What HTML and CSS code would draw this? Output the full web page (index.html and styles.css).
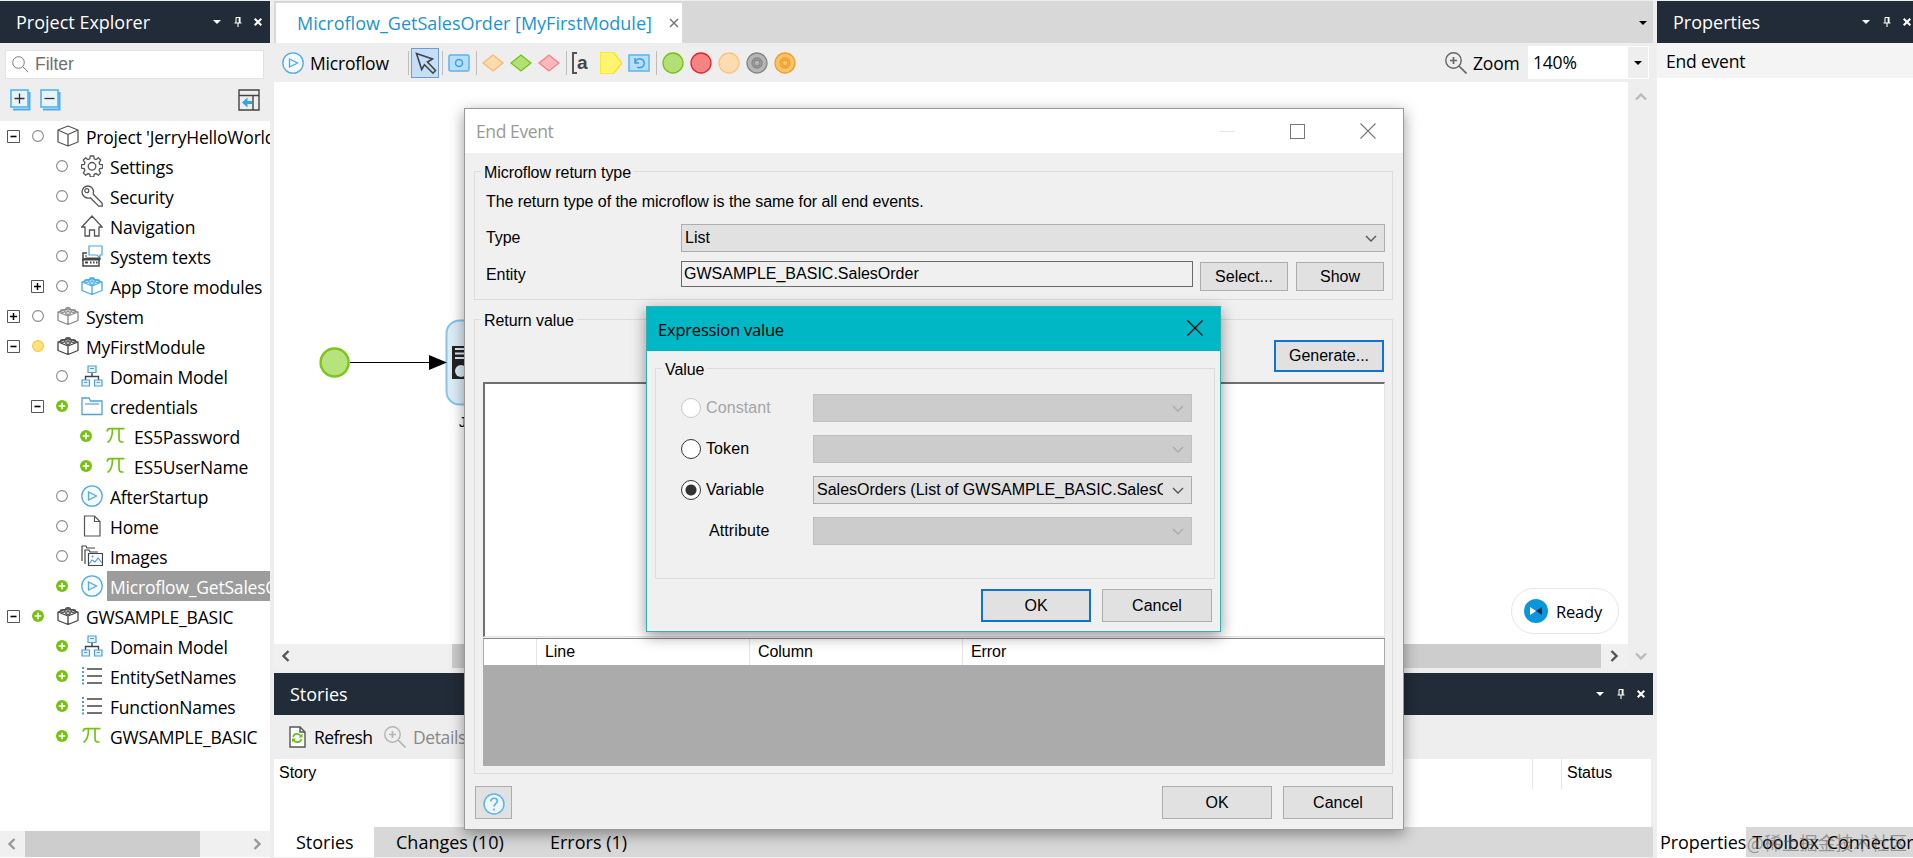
FILE: index.html
```html
<!DOCTYPE html>
<html lang="en">
<head>
  <meta charset="UTF-8">
  <title>Microflow_GetSalesOrder [MyFirstModule]</title>
  <link rel="stylesheet" href="styles.css">
</head>
<body>
  <!-- Icon definitions -->
  <svg class="defs" width="0" height="0">
    <symbol id="caret" viewBox="0 0 8 4"><path d="M0 0h8L4 4z" fill="currentColor"/></symbol>
    <symbol id="pin" viewBox="0 0 8 10"><path d="M2 .5h4v5M2 .5v5M5.2 1v4.500M.5 6h7M4 6v4" fill="none" stroke="currentColor" stroke-width="1.1"/></symbol>
    <symbol id="close" viewBox="0 0 8 8"><path d="M.7.7l6.600 6.600M7.300.7L.7 7.300" stroke="currentColor" stroke-width="2"/></symbol>
    <symbol id="tab-close" viewBox="0 0 10 10"><path d="M1 1l8 8M9 1L1 9" stroke="currentColor" stroke-width="1.5"/></symbol>
    <symbol id="thin-close" viewBox="0 0 16 16"><path d="M.5.5l15 15M15.500.5l-15 15" stroke="currentColor" stroke-width="1.1"/></symbol>
    <symbol id="chevron" viewBox="0 0 12 7"><path d="M1 1l5 5 5-5" fill="none" stroke="currentColor" stroke-width="1.4"/></symbol>
    <symbol id="chevron-bold" viewBox="0 0 12 8"><path d="M1 1.500l5 5 5-5" fill="none" stroke="currentColor" stroke-width="2.4"/></symbol>
    <symbol id="minus-box" viewBox="0 0 13 13"><path d="M.5.5h12v12H.5z" fill="#fff" stroke="#555"/><path d="M3.500 6.500h6" stroke="#000" stroke-width="1.6"/></symbol>
    <symbol id="plus-box" viewBox="0 0 13 13"><path d="M.5.5h12v12H.5z" fill="#fff" stroke="#555"/><path d="M3 6.500h7M6.500 3v7" stroke="#000" stroke-width="1.5"/></symbol>
    <symbol id="st-none" viewBox="0 0 12 12"><circle cx="6" cy="6" r="5.400" fill="#fff" stroke="#888" stroke-width="1.1"/></symbol>
    <symbol id="st-yellow" viewBox="0 0 12 12"><circle cx="6" cy="6" r="5.400" fill="#ffe27a" stroke="#f5c63a" stroke-width="1.1"/></symbol>
    <symbol id="st-add" viewBox="0 0 12 12"><circle cx="6" cy="6" r="6" fill="#76c212"/><path d="M2.700 6h6.600M6 2.700v6.600" stroke="#fff" stroke-width="1.7"/></symbol>
    <symbol id="cube" viewBox="0 0 22 22"><path d="M11 1l10 4v12l-10 4L1 17V5zM1 5l10 4.500L21 5M11 9.500V21" fill="none" stroke="#555" stroke-width="1.3" stroke-linejoin="round"/></symbol>
    <symbol id="gear" viewBox="0 0 22 22"><path d="M9.300 1h3.400l.5 2.800 1.800.8 2.400-1.700 2.300 2.300-1.600 2.400.7 1.800 2.900.5v3.300l-2.900.5-.7 1.800 1.600 2.400-2.300 2.300-2.400-1.600-1.800.7-.5 2.700H9.300l-.5-2.700-1.800-.7-2.400 1.600-2.300-2.300 1.600-2.400-.7-1.800L.4 13.200V9.900l2.800-.5.7-1.800-1.600-2.400 2.300-2.300L7 4.600l1.800-.8z" fill="none" stroke="#555" stroke-width="1.3"/><circle cx="11" cy="11.300" r="3.800" fill="none" stroke="#555" stroke-width="1.300"/></symbol>
    <symbol id="key" viewBox="0 0 22 22"><path d="M12.300 9.300l8.900 8.900v3h-3.500l-8.400-8.400C5 14 1 11 1 7c0-3.500 2.600-6 6-6 4 0 6.500 4 5.300 8.300z" fill="none" stroke="#555" stroke-width="1.3"/><circle cx="5.800" cy="5.700" r="2" fill="none" stroke="#555" stroke-width="1.200"/></symbol>
    <symbol id="home" viewBox="0 0 22 22"><path d="M.8 12L11 1l10.200 11H18v9h-4.500v-6h-5v6H4v-9z" fill="none" stroke="#555" stroke-width="1.3"/></symbol>
    <symbol id="texts" viewBox="0 0 22 22"><path d="M8 1h13v9h-2v3l-3-3H8z" fill="none" stroke="#4aa8e8" stroke-width="1.2"/><path d="M6 8H2v13h16v-7H2" fill="none" stroke="#444" stroke-width="1.5"/><path d="M1 15h18v-2H5zM4 11h2" stroke="#444" fill="#444"/><path d="M4 17.500h3M9 17.500h1.500M12 17.500h1.500M15 17.500h1.500" stroke="#444" stroke-width="2"/></symbol>
    <symbol id="brick" viewBox="0 0 22 22"><path d="M11 3.500L21 7v8.500l-10 4-10-4V7zM1 7l10 4 10-4M11 11v8.500" fill="none" stroke="currentColor" stroke-width="1.3" stroke-linejoin="round"/><g fill="none" stroke="currentColor" stroke-width="1.200"><ellipse cx="11" cy="3.800" rx="2.300" ry="1.300"/><ellipse cx="5.800" cy="6" rx="2.300" ry="1.300"/><ellipse cx="16.200" cy="6" rx="2.300" ry="1.300"/><ellipse cx="11" cy="8" rx="2.300" ry="1.300"/></g></symbol>
    <symbol id="domain" viewBox="0 0 22 22"><path d="M11 7.500v4M4.500 15v-3.500h13V15" fill="none" stroke="#444" stroke-width="1.400"/><g fill="#e4f2fc" stroke="#4a9fe0" stroke-width="1.200"><path d="M7 1h8v6.500H7zM1 15h7.500v6H1zM13.500 15H21v6h-7.500z"/><path d="M9 3.500h4M3.200 17.500h3M15.700 17.500h3"/></g></symbol>
    <symbol id="folder" viewBox="0 0 22 22"><path d="M1 3h7l1.500 3H21v13.500H1z" fill="#fff" stroke="#4aa3dd" stroke-width="1.300"/><path d="M4 9h14" stroke="#4aa3dd" stroke-width="1.200"/></symbol>
    <symbol id="pi" viewBox="0 0 22 22"><path d="M2 6.500C2.500 4 3.500 3.700 5 3.700h14.500M7.500 4c0 6-.8 11-5 13.500M14 4v9.500c0 3 1.500 4 4.500 3.300" fill="none" stroke="#76c212" stroke-width="1.700"/></symbol>
    <symbol id="play" viewBox="0 0 22 22"><circle cx="11" cy="11" r="10.200" fill="#f4faff" stroke="#4fa9ea" stroke-width="1.300"/><path d="M7.500 7l8 4-8 4z" fill="none" stroke="#4fa9ea" stroke-width="1.300"/></symbol>
    <symbol id="page" viewBox="0 0 22 22"><path d="M3.500 1h10L19 6.500V21H3.500zM13.500 1v5.500H19" fill="#fff" stroke="#555" stroke-width="1.200"/></symbol>
    <symbol id="images" viewBox="0 0 22 22"><path d="M1 16V1h4l1 2h8M4 19V5h4l1 2h8" fill="none" stroke="#444" stroke-width="1.200"/><path d="M7.500 8.500h14v12h-14z" fill="#fff" stroke="#444" stroke-width="1.200"/><path d="M8 19l3-4 3 2 3-4 4 5" fill="none" stroke="#4a9fe0" stroke-width="1.200"/><circle cx="11.500" cy="11.500" r="1" fill="#4a9fe0"/></symbol>
    <symbol id="list" viewBox="0 0 22 22"><path d="M6 4h15M6 11h15M6 18h15" stroke="#444" stroke-width="1.500"/><path d="M1 3h2M1 7h2M1 11h2M1 15h2M1 18.500h2" stroke="#4a9fe0" stroke-width="1.800"/></symbol>
    <symbol id="lens" viewBox="0 0 22 22"><circle cx="8.500" cy="8.500" r="7.700" fill="none" stroke="currentColor" stroke-width="1.400"/><path d="M14 14l7.500 7.500M5 8.500h7M8.500 5v7" stroke="currentColor" stroke-width="1.700"/></symbol>
  </svg>

  <div class="workspace">
    <!-- Project Explorer -->
    <aside class="explorer">
      <div class="pane-title">
        <span>Project Explorer</span>
        <div class="pane-tools"><svg class="i-caret"><use href="#caret"/></svg><svg class="i-pin"><use href="#pin"/></svg><svg class="i-close"><use href="#close"/></svg></div>
      </div>
      <div class="explorer-bar">
        <div class="filter">
          <svg width="17" height="17" viewBox="0 0 17 17"><circle cx="6.500" cy="6.500" r="5.800" fill="none" stroke="#777"/><path d="M10.700 10.700l5.500 5.500" stroke="#777"/></svg>
          <span>Filter</span>
        </div>
        <div class="explorer-tools">
          <svg width="22" height="22" viewBox="0 0 22 22"><path d="M19.500 3v17.500H3" fill="none" stroke="#4aaef0" stroke-width="2"/><path d="M1 1h17v17H1z" fill="#e8f4fc" stroke="#4aaef0" stroke-width="1.500"/><path d="M4.500 9.500h10M9.500 4.500v10" stroke="#333" stroke-width="1.300"/></svg>
          <svg width="22" height="22" viewBox="0 0 22 22"><path d="M19.500 3v17.500H3" fill="none" stroke="#4aaef0" stroke-width="2"/><path d="M1 1h17v17H1z" fill="#e8f4fc" stroke="#4aaef0" stroke-width="1.500"/><path d="M4.500 9.500h10" stroke="#333" stroke-width="1.300"/></svg>
          <svg class="locate" width="22" height="22" viewBox="0 0 22 22"><path d="M1 1h20v20H1zM1 6.500h20M15 6.500V21" fill="none" stroke="#444" stroke-width="1.400"/><path d="M4 13.500l5.500-5v3.500H14v3H9.500v3.500z" fill="#2fa4f0"/></svg>
        </div>
      </div>
      <ul class="tree">
        <li class="l0"><svg class="exp"><use href="#minus-box"/></svg><svg class="st"><use href="#st-none"/></svg><svg class="ic"><use href="#cube"/></svg><span>Project 'JerryHelloWorld'</span></li>
        <li class="l1"><i class="exp"></i><svg class="st"><use href="#st-none"/></svg><svg class="ic"><use href="#gear"/></svg><span>Settings</span></li>
        <li class="l1"><i class="exp"></i><svg class="st"><use href="#st-none"/></svg><svg class="ic"><use href="#key"/></svg><span>Security</span></li>
        <li class="l1"><i class="exp"></i><svg class="st"><use href="#st-none"/></svg><svg class="ic"><use href="#home"/></svg><span>Navigation</span></li>
        <li class="l1"><i class="exp"></i><svg class="st"><use href="#st-none"/></svg><svg class="ic"><use href="#texts"/></svg><span>System texts</span></li>
        <li class="l1"><svg class="exp"><use href="#plus-box"/></svg><svg class="st"><use href="#st-none"/></svg><svg class="ic blue"><use href="#brick"/></svg><span>App Store modules</span></li>
        <li class="l0"><svg class="exp"><use href="#plus-box"/></svg><svg class="st"><use href="#st-none"/></svg><svg class="ic gray"><use href="#brick"/></svg><span>System</span></li>
        <li class="l0"><svg class="exp"><use href="#minus-box"/></svg><svg class="st"><use href="#st-yellow"/></svg><svg class="ic"><use href="#brick"/></svg><span>MyFirstModule</span></li>
        <li class="l1"><i class="exp"></i><svg class="st"><use href="#st-none"/></svg><svg class="ic"><use href="#domain"/></svg><span>Domain Model</span></li>
        <li class="l1"><svg class="exp"><use href="#minus-box"/></svg><svg class="st"><use href="#st-add"/></svg><svg class="ic"><use href="#folder"/></svg><span>credentials</span></li>
        <li class="l2"><i class="exp"></i><svg class="st"><use href="#st-add"/></svg><svg class="ic"><use href="#pi"/></svg><span>ES5Password</span></li>
        <li class="l2"><i class="exp"></i><svg class="st"><use href="#st-add"/></svg><svg class="ic"><use href="#pi"/></svg><span>ES5UserName</span></li>
        <li class="l1"><i class="exp"></i><svg class="st"><use href="#st-none"/></svg><svg class="ic"><use href="#play"/></svg><span>AfterStartup</span></li>
        <li class="l1"><i class="exp"></i><svg class="st"><use href="#st-none"/></svg><svg class="ic"><use href="#page"/></svg><span>Home</span></li>
        <li class="l1"><i class="exp"></i><svg class="st"><use href="#st-none"/></svg><svg class="ic"><use href="#images"/></svg><span>Images</span></li>
        <li class="l1 selected"><i class="exp"></i><svg class="st"><use href="#st-add"/></svg><svg class="ic"><use href="#play"/></svg><span>Microflow_GetSalesOrder</span></li>
        <li class="l0"><svg class="exp"><use href="#minus-box"/></svg><svg class="st"><use href="#st-add"/></svg><svg class="ic"><use href="#brick"/></svg><span>GWSAMPLE_BASIC</span></li>
        <li class="l1"><i class="exp"></i><svg class="st"><use href="#st-add"/></svg><svg class="ic"><use href="#domain"/></svg><span>Domain Model</span></li>
        <li class="l1"><i class="exp"></i><svg class="st"><use href="#st-add"/></svg><svg class="ic"><use href="#list"/></svg><span>EntitySetNames</span></li>
        <li class="l1"><i class="exp"></i><svg class="st"><use href="#st-add"/></svg><svg class="ic"><use href="#list"/></svg><span>FunctionNames</span></li>
        <li class="l1"><i class="exp"></i><svg class="st"><use href="#st-add"/></svg><svg class="ic"><use href="#pi"/></svg><span>GWSAMPLE_BASIC</span></li>
      </ul>
      <div class="hscroll explorer-scroll">
        <svg class="arrow left"><use href="#chevron-bold"/></svg>
        <div class="thumb"></div>
        <svg class="arrow right"><use href="#chevron-bold"/></svg>
      </div>
    </aside>

    <!-- Editor and stories -->
    <main class="center">
      <div class="tabbar">
        <div class="tab"><span>Microflow_GetSalesOrder [MyFirstModule]</span><svg width="10" height="10"><use href="#tab-close"/></svg></div>
        <svg class="i-caret"><use href="#caret"/></svg>
      </div>
      <div class="toolbar">
        <svg class="tool" viewBox="0 0 22 22"><use href="#play"/></svg>
        <span class="tool-name">Microflow</span>
        <i class="sep"></i>
        <div class="pointer"><svg width="22" height="23" viewBox="0 0 22 23"><path d="M1.500 1.500l16 5.500-5 3 8 8.500-2.500 2.700-8.500-8.500-2.800 4.800z" fill="none" stroke="#444" stroke-width="1.600"/></svg></div>
        <i class="sep"></i>
        <svg class="tool" viewBox="0 0 22 22"><rect x="1" y="3" width="20" height="16" rx="1.500" fill="#b7dffa" stroke="#5ab4f0" stroke-width="1.500"/><circle cx="11" cy="11" r="3.500" fill="none" stroke="#3c9fe0" stroke-width="1.500"/></svg>
        <i class="sep"></i>
        <svg class="tool" viewBox="0 0 22 22"><path d="M1 11l10-8 10 8-10 8z" fill="#fcdcae" stroke="#fbb866" stroke-width="1.300"/></svg>
        <svg class="tool" viewBox="0 0 22 22"><path d="M1 11l10-8 10 8-10 8z" fill="#b2df76" stroke="#76c212" stroke-width="1.300"/></svg>
        <svg class="tool" viewBox="0 0 22 22"><path d="M1 11l10-8 10 8-10 8z" fill="#fcb8bc" stroke="#f58088" stroke-width="1.300"/></svg>
        <i class="sep"></i>
        <div class="tool note">a</div>
        <svg class="tool" viewBox="0 0 22 22"><path d="M0 0h13l9 11-9 11H0z" fill="#fff56e" stroke="#fae22c" stroke-width="1.500"/></svg>
        <svg class="tool" viewBox="0 0 22 22"><rect x="1" y="3" width="20" height="16" fill="#b7dffa" stroke="#5ab4f0" stroke-width="1.500"/><path d="M7 6v5h4M7.300 10.500a4.500 4.500 0 1 1 2 4.500" fill="none" stroke="#3c9fe0" stroke-width="1.500"/></svg>
        <i class="sep"></i>
        <svg class="tool" viewBox="0 0 22 22"><circle cx="11" cy="11" r="10" fill="#b2df76" stroke="#76c212" stroke-width="1.300"/></svg>
        <svg class="tool" viewBox="0 0 22 22"><circle cx="11" cy="11" r="10" fill="#f38482" stroke="#e6202b" stroke-width="1.300"/></svg>
        <svg class="tool" viewBox="0 0 22 22"><circle cx="11" cy="11" r="10" fill="#fddcb0" stroke="#fcc27c" stroke-width="1.300"/></svg>
        <svg class="tool" viewBox="0 0 22 22"><g fill="#b5b5b5" stroke="#858585" stroke-width="1.300"><circle cx="11" cy="11" r="10"/><circle cx="11" cy="11" r="5"/><circle cx="11" cy="11" r="3"/></g></svg>
        <svg class="tool" viewBox="0 0 22 22"><g fill="#f8c273" stroke="#f0a020" stroke-width="1.300"><circle cx="11" cy="11" r="10"/><circle cx="11" cy="11" r="5"/><circle cx="11" cy="11" r="3"/></g></svg>
        <div class="zoom">
          <svg class="tool"><use href="#lens"/></svg>
          <span>Zoom</span>
          <div class="zoom-box"><b>140%</b><i><svg class="i-caret"><use href="#caret"/></svg></i></div>
        </div>
      </div>
      <div class="editor">
        <div class="canvas">
          <svg class="flow" width="200" height="200" viewBox="274 282 200 200">
            <rect x="446.500" y="320.500" width="90" height="84" rx="13" fill="#dcedf8" stroke="#86c5e8" stroke-width="2"/>
            <path d="M350 362.500h80" stroke="#000"/>
            <path d="M429 355l18 7.500-18 7.500z"/>
            <circle cx="334.600" cy="362.500" r="14" fill="#b7e37c" stroke="#7cc61c" stroke-width="2.500"/>
            <path d="M452 346h20v33h-20z" fill="#222"/>
            <path d="M455 349h18M455 353.500h18M455 358h18" stroke="#dcedf8" stroke-width="2"/>
            <circle cx="461" cy="371" r="6" fill="#dcedf8"/>
            <text x="459" y="427" class="node-label">J</text>
          </svg>
          <div class="ready"><svg width="24" height="24" viewBox="0 0 24 24"><circle cx="12" cy="12" r="12" fill="#0a96dc"/><path d="M6 8l6 4-6 4z" fill="#fff"/><path d="M18 8l-6 4 6 4z" fill="#16304c"/></svg><span>Ready</span></div>
        </div>
        <div class="vscroll"><svg class="arrow up"><use href="#chevron-bold"/></svg><svg class="arrow"><use href="#chevron-bold"/></svg></div>
        <div class="hscroll canvas-scroll">
          <svg class="arrow left"><use href="#chevron-bold"/></svg>
          <div class="thumb"></div>
          <svg class="arrow right"><use href="#chevron-bold"/></svg>
        </div>
      </div>
      <section class="stories">
        <div class="pane-title">
          <span>Stories</span>
          <div class="pane-tools"><svg class="i-caret"><use href="#caret"/></svg><svg class="i-pin"><use href="#pin"/></svg><svg class="i-close"><use href="#close"/></svg></div>
        </div>
        <div class="stories-bar">
          <svg width="17" height="22" viewBox="0 0 17 22"><path d="M1 1h10l5 5v15H1zM11 1v5h5" fill="#fff" stroke="#555" stroke-width="1.400"/><path d="M4 11c1-4 6-4 8-1M12.500 13c-1 4-6 4-8 1" fill="none" stroke="#6bbd12" stroke-width="1.600"/><path d="M13.500 7.500v4h-4zM3 16.500v-4h4z" fill="#6bbd12"/></svg>
          <span>Refresh</span>
          <svg class="lens-off" width="22" height="22"><use href="#lens"/></svg>
          <span class="off">Details</span>
        </div>
        <div class="stories-head"><span class="c-story">Story</span><span class="c-gap"></span><span class="c-status">Status</span></div>
        <div class="bottom-tabs">
          <span class="active">Stories</span><span>Changes (10)</span><span>Errors (1)</span>
        </div>
      </section>
    </main>

    <!-- Properties -->
    <aside class="properties">
      <div class="pane-title">
        <span>Properties</span>
        <div class="pane-tools"><svg class="i-caret"><use href="#caret"/></svg><svg class="i-pin"><use href="#pin"/></svg><svg class="i-close"><use href="#close"/></svg></div>
      </div>
      <div class="prop-name">End event</div>
      <div class="prop-body"></div>
      <div class="prop-tabs"><span class="active">Properties</span><span class="rest"><b>Toolbox</b><b>Connector</b></span></div>
      <div class="watermark">@稀土掘金技术社区</div>
    </aside>
  </div>

  <!-- End Event dialog -->
  <div class="dialog end-event">
    <div class="dialog-title">
      <span>End Event</span>
      <div class="win-buttons">
        <i class="min"></i><i class="max"></i><svg width="16" height="16"><use href="#thin-close"/></svg>
      </div>
    </div>
    <div class="dialog-body">
      <div class="group group-type">
        <div class="legend">Microflow return type</div>
        <p class="hint">The return type of the microflow is the same for all end events.</p>
        <div class="row type-row">
          <label>Type</label>
          <div class="combo"><span>List</span><svg class="arrow"><use href="#chevron"/></svg></div>
        </div>
        <div class="row entity-row">
          <label>Entity</label>
          <div class="input">GWSAMPLE_BASIC.SalesOrder</div>
          <button class="small">Select...</button>
          <button class="small">Show</button>
        </div>
      </div>
      <div class="group group-value">
        <div class="legend">Return value</div>
        <button class="primary generate">Generate...</button>
        <div class="textarea"></div>
        <div class="grid">
          <div class="grid-head"><span></span><span>Line</span><span>Column</span><span>Error</span></div>
        </div>
      </div>
      <div class="dialog-foot">
        <button class="help"><svg width="22" height="22" viewBox="0 0 22 22"><circle cx="11" cy="11" r="10" fill="#eef6fc" stroke="#5ab4ee" stroke-width="1.500"/><path d="M7.800 8.500c0-4.500 6.600-4 6.600-.4 0 2.400-3.400 2.600-3.400 5.400M11 15.500v2" fill="none" stroke="#5ab4ee" stroke-width="1.700"/></svg></button>
        <button class="first">OK</button>
        <button>Cancel</button>
      </div>
    </div>
  </div>

  <!-- Expression value dialog -->
  <div class="dialog expression">
    <div class="dialog-title">
      <span>Expression value</span>
      <svg width="16" height="16"><use href="#thin-close"/></svg>
    </div>
    <div class="dialog-body">
      <div class="group">
        <div class="legend">Value</div>
        <div class="option off"><i class="radio"></i><label>Constant</label><div class="combo off"><svg class="arrow"><use href="#chevron"/></svg></div></div>
        <div class="option"><i class="radio"></i><label>Token</label><div class="combo off"><svg class="arrow"><use href="#chevron"/></svg></div></div>
        <div class="option"><i class="radio on"></i><label>Variable</label><div class="combo"><span>SalesOrders (List of GWSAMPLE_BASIC.SalesOrder)</span><svg class="arrow"><use href="#chevron"/></svg></div></div>
        <div class="option attr"><i class="radio none"></i><label>Attribute</label><div class="combo off"><svg class="arrow"><use href="#chevron"/></svg></div></div>
      </div>
      <div class="dialog-foot">
        <button class="primary first">OK</button>
        <button>Cancel</button>
      </div>
    </div>
  </div>
</body>
</html>
```
FILE: styles.css
```css
* {
  margin: 0;
  padding: 0;
  box-sizing: border-box;
}

body {
  width: 1913px;
  height: 858px;
  overflow: hidden;
  background-color: #eeeeee;
  color: #000;
  font-family: "Open Sans", "Noto Sans", sans-serif;
  font-size: 17.5px;
  letter-spacing: -0.2px;
  white-space: nowrap;
}

svg {
  display: block;
  flex: none;
}

i,
b {
  font-style: normal;
  font-weight: normal;
}

.defs {
  position: absolute;
}

.workspace {
  display: grid;
  grid-template-columns: 270px 1379px 256px;
  column-gap: 4px;
  height: 858px;
  padding-top: 1px;
}

/* Shared pane header */
.pane-title {
  display: flex;
  align-items: center;
  justify-content: space-between;
  height: 42px;
  padding: 0 8px 0 16px;
  background-color: #222b38;
  color: #fff;
  font-size: 18px;
  letter-spacing: 0;
}

.pane-title span {
  padding-bottom: 1px;
}

.pane-tools {
  display: flex;
  align-items: center;
  gap: 12.5px;
}

.i-caret {
  width: 8px;
  height: 4px;
}

.i-pin {
  width: 8px;
  height: 10px;
}

.i-close {
  width: 8px;
  height: 8px;
}

.arrow {
  width: 12px;
  height: 7px;
  color: #555;
}

.hscroll .arrow,
.vscroll .arrow {
  height: 8px;
}

.arrow.left {
  transform: rotate(90deg);
}

.arrow.right {
  transform: rotate(-90deg);
}

.arrow.up {
  transform: rotate(180deg);
}

/* Project Explorer */
.explorer {
  display: flex;
  flex-direction: column;
  min-width: 0;
  overflow: hidden;
  background-color: #fff;
}

.explorer-bar {
  height: 78px;
  padding: 7px 6px 0 5px;
  background-color: #eeeeee;
}

.filter {
  display: flex;
  align-items: center;
  gap: 6px;
  height: 29px;
  padding-left: 6px;
  border: 1px solid #e2e2e2;
  background-color: #fff;
  color: #707070;
  font-family: "Liberation Sans", sans-serif;
  letter-spacing: 0;
}

.explorer-tools {
  display: flex;
  gap: 8px;
  padding: 10px 4px 0 5px;
}

.explorer-tools .locate {
  margin-left: auto;
}

.tree {
  flex: 1;
  list-style-type: none;
}

.tree li {
  display: flex;
  align-items: center;
  height: 30px;
  padding-left: 7px;
}

.tree .l1 {
  padding-left: 31px;
}

.tree .l2 {
  padding-left: 55px;
}

.exp {
  flex: none;
  width: 13px;
  height: 13px;
}

.st {
  width: 12px;
  height: 12px;
  margin-left: 12px;
}

.ic {
  width: 22px;
  height: 22px;
  margin-left: 13px;
  color: #444;
}

.ic.blue {
  color: #3fa9ee;
}

.ic.gray {
  color: #888;
}

.tree span {
  height: 30px;
  margin-left: 4px;
  padding-left: 3px;
  line-height: 32px;
}

.selected span {
  flex: 1;
  background-color: #9c9c9c;
  color: #fff;
}

.hscroll {
  display: flex;
  align-items: center;
  background-color: #f0f0f0;
}

.hscroll .thumb {
  background-color: #cdcdcd;
}

.explorer-scroll {
  height: 26px;
  margin-bottom: 1px;
}

.explorer-scroll .arrow {
  margin: 0 7px 0 6px;
  color: #999;
}

.explorer-scroll .thumb {
  width: 175px;
  height: 26px;
  margin: 0 auto 0 0;
}

/* Editor */
.center {
  display: flex;
  flex-direction: column;
  min-width: 0;
}

.tabbar {
  display: flex;
  align-items: center;
  justify-content: space-between;
  height: 42px;
  padding: 2px 6px 0 2px;
  background-color: #d8d8d8;
}

.tab {
  display: flex;
  align-items: center;
  justify-content: space-between;
  width: 406px;
  height: 40px;
  padding: 0 3px 0 21px;
  background-color: #fff;
  color: #1a94d0;
  font-size: 18px;
  letter-spacing: 0;
}

.tab svg {
  color: #777;
}

.toolbar {
  display: flex;
  align-items: center;
  height: 39px;
  padding-left: 8px;
}

.tool {
  flex: none;
  width: 22px;
  height: 22px;
  margin-right: 6px;
}

.tool-name {
  width: 98px;
}

.sep {
  width: 1px;
  height: 24px;
  margin-right: 5px;
  background-color: #bdbdbd;
}

.pointer {
  width: 28px;
  height: 30px;
  margin: 0 3px 0 -3px;
  padding: 3px;
  border: 1px solid #6f9bd0;
  background-color: #c5dff8;
}

.note {
  width: 16px;
  margin-right: 12px;
  padding-left: 5px;
  background: linear-gradient(#555, #555) 0 0 / 2px 22px no-repeat, linear-gradient(#555, #555) 0 0 / 5px 2px no-repeat, linear-gradient(#555, #555) 0 100% / 5px 2px no-repeat;
  color: #444;
  font: bold 19px/21px "Liberation Sans", sans-serif;
}

.zoom {
  display: flex;
  align-items: center;
  margin-left: auto;
  padding-right: 4px;
}

.zoom .tool {
  color: #666;
}

.zoom span {
  width: 55px;
}

.zoom-box {
  display: flex;
  justify-content: space-between;
  width: 121px;
  height: 33px;
  padding: 1px 1px 1px 5px;
  background-color: #fff;
  line-height: 31px;
}

.zoom-box i {
  display: flex;
  align-items: center;
  justify-content: center;
  width: 20px;
  background-color: #eeeeee;
}

.editor {
  display: grid;
  grid-template-columns: 1fr 25px;
  grid-template-rows: 562px 24px;
  height: 591px;
}

.canvas {
  position: relative;
  background-color: #fff;
}

.flow {
  position: absolute;
  top: 200px;
  left: 0;
}

.node-label {
  font: 14px "Liberation Sans", sans-serif;
}

.ready {
  position: absolute;
  right: 9px;
  bottom: 10px;
  display: flex;
  align-items: center;
  gap: 8px;
  width: 108px;
  height: 46px;
  padding-left: 12px;
  border: 1px solid #e6e6e6;
  border-radius: 23px;
  font-size: 16.5px;
}

.vscroll {
  display: flex;
  flex-direction: column;
  grid-row: span 2;
  align-items: center;
  justify-content: space-between;
  padding: 11px 0 8px;
}

.vscroll .arrow {
  color: #bbb;
}

.canvas-scroll .arrow {
  margin: 0 8px 0 6px;
}

.canvas-scroll .thumb {
  width: 1149px;
  height: 24px;
  margin: 0 1px 0 auto;
}

/* Stories */
.stories-bar {
  display: flex;
  align-items: center;
  height: 44px;
  padding-left: 15px;
}

.stories-bar span {
  width: 78px;
  padding-left: 8px;
  letter-spacing: -0.6px;
}

.lens-off {
  color: #b4b4b4;
}

.stories-bar .off {
  padding-left: 7px;
  color: #888;
  letter-spacing: -0.4px;
}

.stories-head {
  display: flex;
  height: 68px;
  margin-right: 2px;
  padding-left: 5px;
  background-color: #fff;
  font: 16px/28px "Liberation Sans", sans-serif;
  letter-spacing: 0;
}

.c-story {
  width: 1253px;
}

.c-gap,
.c-status {
  width: 29px;
  height: 30px;
  border-left: 1px solid #e5e5e5;
}

.c-status {
  padding-left: 5px;
}

.bottom-tabs {
  display: flex;
  height: 30px;
  background-color: #d8d8d8;
  font-size: 18px;
  letter-spacing: 0;
  line-height: 30px;
}

.bottom-tabs span {
  width: 154px;
  padding-left: 22px;
}

.bottom-tabs .active {
  width: 100px;
  background-color: #fff;
}

/* Properties */
.properties {
  position: relative;
  display: flex;
  flex-direction: column;
  overflow: hidden;
  background-color: #fff;
}

.properties .pane-title {
  padding-right: 2px;
}

.prop-name {
  height: 35px;
  padding-left: 9px;
  background-color: #f4f4f4;
  line-height: 36px;
}

.prop-body {
  flex: 1;
}

.prop-tabs {
  display: flex;
  height: 30px;
  margin-bottom: 1px;
  font-size: 18px;
  letter-spacing: -0.1px;
  line-height: 30px;
}

.prop-tabs .active {
  width: 92px;
  padding-left: 3px;
}

.rest {
  display: flex;
  flex: 1;
  gap: 8px;
  padding-left: 6px;
  background-color: #d8d8d8;
}

.watermark {
  position: absolute;
  right: 6px;
  bottom: 3px;
  color: rgba(90, 90, 90, 0.55);
  font: 18px/26px "Noto Sans CJK SC", sans-serif;
  letter-spacing: -0.1px;
}

/* Dialogs */
.dialog {
  position: absolute;
  background-color: #f0f0f0;
  font: 16px "Liberation Sans", sans-serif;
  letter-spacing: -0.07px;
}

.dialog-title {
  display: flex;
  align-items: center;
  justify-content: space-between;
  font-family: "Open Sans", "Noto Sans", sans-serif;
}

.end-event {
  top: 108px;
  left: 464px;
  width: 940px;
  height: 722px;
  border: 1px solid #999;
  box-shadow: 0 4px 14px rgba(0, 0, 0, 0.4);
}

.end-event .dialog-title {
  height: 44px;
  padding: 0 27px 0 11px;
  background-color: #fff;
  color: #999;
  font-size: 17.5px;
  letter-spacing: -0.4px;
}

.win-buttons {
  display: flex;
  align-items: center;
  gap: 55px;
}

.win-buttons .min {
  width: 15px;
  height: 1px;
  background-color: #e4e4e4;
}

.win-buttons .max {
  width: 15px;
  height: 15px;
  border: 1px solid #777;
}

.win-buttons svg {
  color: #777;
}

.end-event .dialog-body {
  padding: 18px 10px 0 9px;
}

.group {
  border: 1px solid #dcdcdc;
}

.legend {
  width: max-content;
  height: 20px;
  margin: -9px 0 0 6px;
  padding: 0 3px;
  background-color: #f0f0f0;
  line-height: 20px;
}

.group-type {
  height: 129px;
}

.hint {
  padding: 9px 0 0 11px;
  line-height: 20px;
}

.row {
  display: flex;
  padding-left: 11px;
}

.row label {
  width: 195px;
  line-height: 28px;
}

.type-row {
  padding-top: 12px;
}

.combo {
  display: flex;
  align-items: center;
  justify-content: space-between;
  height: 28px;
  padding: 0 7px 0 3px;
  border: 1px solid #adadad;
  background-color: #e1e1e1;
}

.combo.off {
  justify-content: flex-end;
  border-color: #c0c0c0;
  background-color: #cccccc;
}

.combo.off .arrow {
  color: #aaa;
}

.type-row .combo {
  width: 704px;
}

.entity-row {
  padding-top: 9px;
}

.input {
  width: 512px;
  height: 26px;
  margin-right: 7px;
  padding-left: 2px;
  border: 1px solid #6a6a6a;
  line-height: 24px;
  letter-spacing: 0;
}

button {
  width: 110px;
  height: 33px;
  border: 1px solid #adadad;
  background-color: #e1e1e1;
  font: 16px "Liberation Sans", sans-serif;
}

button.small {
  width: 88px;
  height: 29px;
  margin: 1px 8px 0 0;
}

button.primary {
  border: 2px solid #0f74cf;
}

.group-value {
  height: 455px;
  margin-top: 19px;
  padding: 0 7px 0 8px;
}

.group-value .legend {
  margin-left: -2px;
}

.generate {
  display: block;
  height: 32px;
  margin: 9px 1px 10px auto;
}

.textarea {
  height: 255px;
  margin-bottom: 1px;
  border: solid #707070;
  border-width: 2px 0 0 2px;
  border-right: 1px solid #e3e3e3;
  border-bottom: 1px solid #e3e3e3;
  background-color: #fff;
}

.grid {
  height: 128px;
  border-top: 1px solid #888;
  background-color: #ababab;
}

.grid-head {
  display: grid;
  grid-template-columns: 52px 213px 213px 1fr;
  height: 26px;
  margin: 0 1px;
  background-color: #fff;
  line-height: 26px;
}

.grid-head span + span {
  padding-left: 8px;
  border-left: 1px solid #e5e5e5;
}

.dialog-foot {
  display: flex;
}

.dialog-foot .first {
  margin-left: auto;
}

.end-event .dialog-foot {
  gap: 11px;
  padding: 12px 0 0 1px;
}

.help {
  display: flex;
  align-items: center;
  justify-content: center;
  width: 37px;
  padding-top: 2px;
}

.expression {
  top: 306px;
  left: 646px;
  width: 575px;
  height: 326px;
  border: 1px solid #2fb1b6;
  box-shadow: 0 4px 14px rgba(0, 0, 0, 0.42);
}

.expression .dialog-title {
  height: 44px;
  padding: 0 17px 0 11px;
  background-color: #00b7c5;
  font-size: 16.5px;
  letter-spacing: -0.2px;
}

.expression .dialog-title svg {
  margin-bottom: 2px;
}

.expression .dialog-body {
  padding: 17px 5px 0 8px;
}

.expression .group {
  height: 211px;
}

.option {
  display: flex;
  align-items: center;
  height: 28px;
  margin-bottom: 13px;
  padding-left: 25px;
}

.legend + .option {
  margin-top: 14px;
}

.option label {
  width: 107px;
  letter-spacing: 0.1px;
}

.option.off label {
  color: #a5a5a5;
}

.option.attr label {
  padding-left: 3px;
}

.option .combo {
  width: 379px;
}

.combo span {
  max-width: 346px;
  overflow: hidden;
  letter-spacing: 0;
}

.radio {
  width: 20px;
  height: 20px;
  margin-right: 5px;
  border: 1px solid #333;
  border-radius: 50%;
  background-color: #fff;
}

.radio.on {
  background: radial-gradient(circle, #333 5px, #fff 6px);
}

.radio.none {
  visibility: hidden;
}

.option.off .radio {
  border-color: #c8c8c8;
}

.expression .dialog-foot {
  gap: 11px;
  padding: 10px 3px 0 0;
}
```
